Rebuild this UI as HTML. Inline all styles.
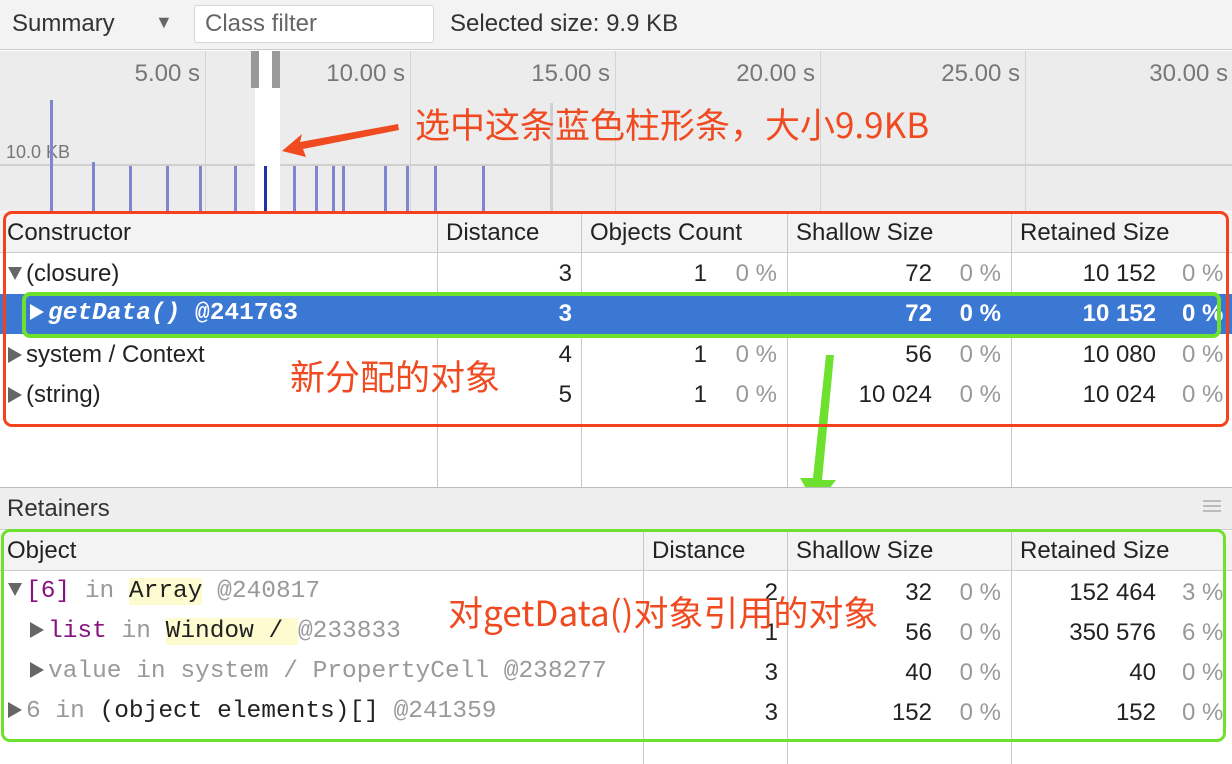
<!DOCTYPE html>
<html><head><meta charset="utf-8"><style>
*{margin:0;padding:0;box-sizing:border-box}
body{width:1232px;height:764px;overflow:hidden;background:#fff;font-family:"Liberation Sans","Noto Sans CJK SC",sans-serif;font-size:24px;color:#222;position:relative}
.a{position:absolute;white-space:nowrap}
.m{font-family:"Liberation Mono","DejaVu Sans Mono",monospace;font-size:24.5px}
.g{color:#999}
.vl{position:absolute;width:1px;background:#c8c8c8}
.r{text-align:right}
.cn{color:#f04a20;font-size:35px;font-family:"Noto Sans CJK SC",sans-serif}
.tr{display:inline-block;width:0;height:0;border-left:14px solid #666;border-top:8px solid transparent;border-bottom:8px solid transparent;margin-right:4px;vertical-align:-1px}
.td{display:inline-block;width:0;height:0;border-top:13px solid #666;border-left:7px solid transparent;border-right:7px solid transparent;margin-right:4px;vertical-align:1px}
.w{border-left-color:#fff}
</style></head><body>
<!-- toolbar -->
<div class="a" style="left:0;top:0;width:1232px;height:50px;background:#f3f3f3;border-bottom:1px solid #ccc"></div>
<div class="a" style="left:12px;top:10px;color:#333">Summary</div>
<div class="a" style="left:155px;top:12px;color:#666;font-size:18px">▼</div>
<div class="a" style="left:194px;top:5px;width:240px;height:38px;background:#fff;border:1px solid #d5d5d5;border-radius:3px"></div>
<div class="a" style="left:205px;top:10px;color:#666">Class filter</div>
<div class="a" style="left:450px;top:10px;color:#333">Selected size: 9.9 KB</div>
<!-- overview -->
<div class="a" style="left:0;top:51px;width:1232px;height:160px;background:#ececec"></div>
<div class="vl" style="left:205px;top:51px;height:160px;background:#d4d4d4"></div>
<div class="vl" style="left:410px;top:51px;height:160px;background:#d4d4d4"></div>
<div class="vl" style="left:615px;top:51px;height:160px;background:#d4d4d4"></div>
<div class="vl" style="left:820px;top:51px;height:160px;background:#d4d4d4"></div>
<div class="vl" style="left:1025px;top:51px;height:160px;background:#d4d4d4"></div>
<div class="a" style="left:550px;top:103px;width:3px;height:108px;background:#d0d0d0"></div>
<div class="a" style="left:0;top:164px;width:1232px;height:2px;background:#d0d0d0"></div>
<div class="a r" style="left:100px;width:100px;top:60px;color:#777">5.00 s</div>
<div class="a r" style="left:300px;width:105px;top:60px;color:#777">10.00 s</div>
<div class="a r" style="left:505px;width:105px;top:60px;color:#777">15.00 s</div>
<div class="a r" style="left:710px;width:105px;top:60px;color:#777">20.00 s</div>
<div class="a r" style="left:915px;width:105px;top:60px;color:#777">25.00 s</div>
<div class="a r" style="left:1120px;width:108px;top:60px;color:#777">30.00 s</div>
<div class="a" style="left:6px;top:142px;font-size:18px;color:#777">10.0 KB</div>
<div class="a" style="left:255px;top:51px;width:25px;height:160px;background:#fff"></div>
<div class="a" style="left:251px;top:51px;width:8px;height:37px;background:#999"></div>
<div class="a" style="left:272px;top:51px;width:8px;height:37px;background:#999"></div>
<div class="a" style="left:50px;top:100px;width:3px;height:111px;background:#7f86d0"></div>
<div class="a" style="left:92px;top:162px;width:3px;height:49px;background:#7f86d0"></div>
<div class="a" style="left:129px;top:166px;width:3px;height:45px;background:#7f86d0"></div>
<div class="a" style="left:166px;top:166px;width:3px;height:45px;background:#7f86d0"></div>
<div class="a" style="left:199px;top:166px;width:3px;height:45px;background:#7f86d0"></div>
<div class="a" style="left:234px;top:166px;width:3px;height:45px;background:#7f86d0"></div>
<div class="a" style="left:264px;top:166px;width:3px;height:45px;background:#2233aa"></div>
<div class="a" style="left:293px;top:166px;width:3px;height:45px;background:#7f86d0"></div>
<div class="a" style="left:315px;top:166px;width:3px;height:45px;background:#7f86d0"></div>
<div class="a" style="left:332px;top:166px;width:3px;height:45px;background:#7f86d0"></div>
<div class="a" style="left:342px;top:166px;width:3px;height:45px;background:#7f86d0"></div>
<div class="a" style="left:384px;top:166px;width:3px;height:45px;background:#7f86d0"></div>
<div class="a" style="left:406px;top:166px;width:3px;height:45px;background:#7f86d0"></div>
<div class="a" style="left:434px;top:166px;width:3px;height:45px;background:#7f86d0"></div>
<div class="a" style="left:482px;top:166px;width:3px;height:45px;background:#7f86d0"></div>
<div class="a cn" style="left:415px;top:98px">选中这条蓝色柱形条，大小9.9KB</div>
<svg class="a" style="left:0;top:0" width="1232" height="764">
<polygon points="398,124 300,142 302,134 282,151 306,157 303,149 399,130" fill="#f04a20"/>
<polygon points="826,355 834,355 822,480 836,480 816,506 800,478 813,478" fill="#6ee02e"/>
</svg>
<!-- top table -->
<div class="a" style="left:0;top:212px;width:1232px;height:41px;background:#f3f3f3;border-bottom:1px solid #ccc"></div>
<div class="vl" style="left:437px;top:212px;height:275px"></div>
<div class="vl" style="left:581px;top:212px;height:275px"></div>
<div class="vl" style="left:787px;top:212px;height:275px"></div>
<div class="vl" style="left:1011px;top:212px;height:275px"></div>
<div class="a" style="left:7px;top:219px">Constructor</div>
<div class="a" style="left:446px;top:219px">Distance</div>
<div class="a" style="left:590px;top:219px">Objects Count</div>
<div class="a" style="left:796px;top:219px">Shallow Size</div>
<div class="a" style="left:1020px;top:219px">Retained Size</div>
<div class="a" style="left:0;top:294px;width:1232px;height:40px;background:#3a78d4"></div>
<div class="a" style="left:8px;top:260px"><span class="td"></span>(closure)</div>
<div class="a m" style="left:30px;top:300px;color:#fff;font-weight:bold"><span class="tr w"></span><i>getData()</i> @241763</div>
<div class="a" style="left:8px;top:341px"><span class="tr"></span>system / Context</div>
<div class="a" style="left:8px;top:381px"><span class="tr"></span>(string)</div>
<!-- numbers -->
<div class="a r" style="left:437px;width:135px;top:260px">3</div>
<div class="a r" style="left:437px;width:135px;top:300px;color:#fff;font-weight:bold">3</div>
<div class="a r" style="left:437px;width:135px;top:341px">4</div>
<div class="a r" style="left:437px;width:135px;top:381px">5</div>
<div class="a r" style="left:581px;width:126px;top:260px">1</div>
<div class="a r" style="left:581px;width:126px;top:341px">1</div>
<div class="a r" style="left:581px;width:126px;top:381px">1</div>
<div class="a r g" style="left:581px;width:196px;top:260px">0 %</div>
<div class="a r g" style="left:581px;width:196px;top:341px">0 %</div>
<div class="a r g" style="left:581px;width:196px;top:381px">0 %</div>
<div class="a r" style="left:787px;width:145px;top:260px">72</div>
<div class="a r" style="left:787px;width:145px;top:300px;color:#fff;font-weight:bold">72</div>
<div class="a r" style="left:787px;width:145px;top:341px">56</div>
<div class="a r" style="left:787px;width:145px;top:381px">10 024</div>
<div class="a r g" style="left:787px;width:214px;top:260px">0 %</div>
<div class="a r" style="left:787px;width:214px;top:300px;color:#fff;font-weight:bold">0 %</div>
<div class="a r g" style="left:787px;width:214px;top:341px">0 %</div>
<div class="a r g" style="left:787px;width:214px;top:381px">0 %</div>
<div class="a r" style="left:1011px;width:145px;top:260px">10 152</div>
<div class="a r" style="left:1011px;width:145px;top:300px;color:#fff;font-weight:bold">10 152</div>
<div class="a r" style="left:1011px;width:145px;top:341px">10 080</div>
<div class="a r" style="left:1011px;width:145px;top:381px">10 024</div>
<div class="a g" style="left:1182px;top:260px">0 %</div>
<div class="a" style="left:1182px;top:300px;color:#fff;font-weight:bold">0 %</div>
<div class="a g" style="left:1182px;top:341px">0 %</div>
<div class="a g" style="left:1182px;top:381px">0 %</div>
<div class="a cn" style="left:290px;top:350px">新分配的对象</div>
<div class="a" style="left:3px;top:211px;width:1226px;height:216px;border:3px solid #f5421e;border-radius:9px"></div>
<div class="a" style="left:22px;top:292px;width:1199px;height:46px;border:4px solid #6ee02e;border-radius:8px"></div>
<!-- retainers -->
<div class="a" style="left:0;top:487px;width:1232px;height:43px;background:#eeeeee;border-top:1px solid #bbb;border-bottom:1px solid #ccc"></div>
<div class="a" style="left:7px;top:495px;color:#333">Retainers</div>
<div class="a" style="left:1203px;top:500px;width:18px;height:2px;background:#bbb;box-shadow:0 5px 0 #bbb,0 10px 0 #bbb"></div>
<div class="a" style="left:0;top:531px;width:1232px;height:40px;background:#f3f3f3;border-bottom:1px solid #ccc"></div>
<div class="vl" style="left:643px;top:531px;height:233px"></div>
<div class="vl" style="left:787px;top:531px;height:233px"></div>
<div class="vl" style="left:1011px;top:531px;height:233px"></div>
<div class="a" style="left:7px;top:537px">Object</div>
<div class="a" style="left:652px;top:537px">Distance</div>
<div class="a" style="left:796px;top:537px">Shallow Size</div>
<div class="a" style="left:1020px;top:537px">Retained Size</div>
<div class="a m" style="left:8px;top:578px"><span class="td"></span><span style="color:#881280">[6]</span> <span class="g">in</span> <span style="background:#fffbd0;color:#222">Array</span> <span class="g">@240817</span></div>
<div class="a m" style="left:30px;top:618px"><span class="tr"></span><span style="color:#881280">list</span> <span class="g">in</span> <span style="background:#fffbd0;color:#222">Window / </span><span class="g">@233833</span></div>
<div class="a m g" style="left:30px;top:658px"><span class="tr"></span>value in system / PropertyCell @238277</div>
<div class="a m" style="left:8px;top:698px"><span class="tr"></span><span class="g">6 in</span> (object elements)[] <span class="g">@241359</span></div>
<div class="a r" style="left:643px;width:135px;top:579px">2</div>
<div class="a r" style="left:643px;width:135px;top:619px">1</div>
<div class="a r" style="left:643px;width:135px;top:659px">3</div>
<div class="a r" style="left:643px;width:135px;top:699px">3</div>
<div class="a r" style="left:787px;width:145px;top:579px">32</div>
<div class="a r" style="left:787px;width:145px;top:619px">56</div>
<div class="a r" style="left:787px;width:145px;top:659px">40</div>
<div class="a r" style="left:787px;width:145px;top:699px">152</div>
<div class="a r g" style="left:787px;width:214px;top:579px">0 %</div>
<div class="a r g" style="left:787px;width:214px;top:619px">0 %</div>
<div class="a r g" style="left:787px;width:214px;top:659px">0 %</div>
<div class="a r g" style="left:787px;width:214px;top:699px">0 %</div>
<div class="a r" style="left:1011px;width:145px;top:579px">152 464</div>
<div class="a r" style="left:1011px;width:145px;top:619px">350 576</div>
<div class="a r" style="left:1011px;width:145px;top:659px">40</div>
<div class="a r" style="left:1011px;width:145px;top:699px">152</div>
<div class="a g" style="left:1182px;top:579px">3 %</div>
<div class="a g" style="left:1182px;top:619px">6 %</div>
<div class="a g" style="left:1182px;top:659px">0 %</div>
<div class="a g" style="left:1182px;top:699px">0 %</div>
<div class="a cn" style="left:448px;top:586px">对getData()对象引用的对象</div>
<div class="a" style="left:1px;top:529px;width:1225px;height:213px;border:3px solid #6ee02e;border-radius:9px"></div>
</body></html>
